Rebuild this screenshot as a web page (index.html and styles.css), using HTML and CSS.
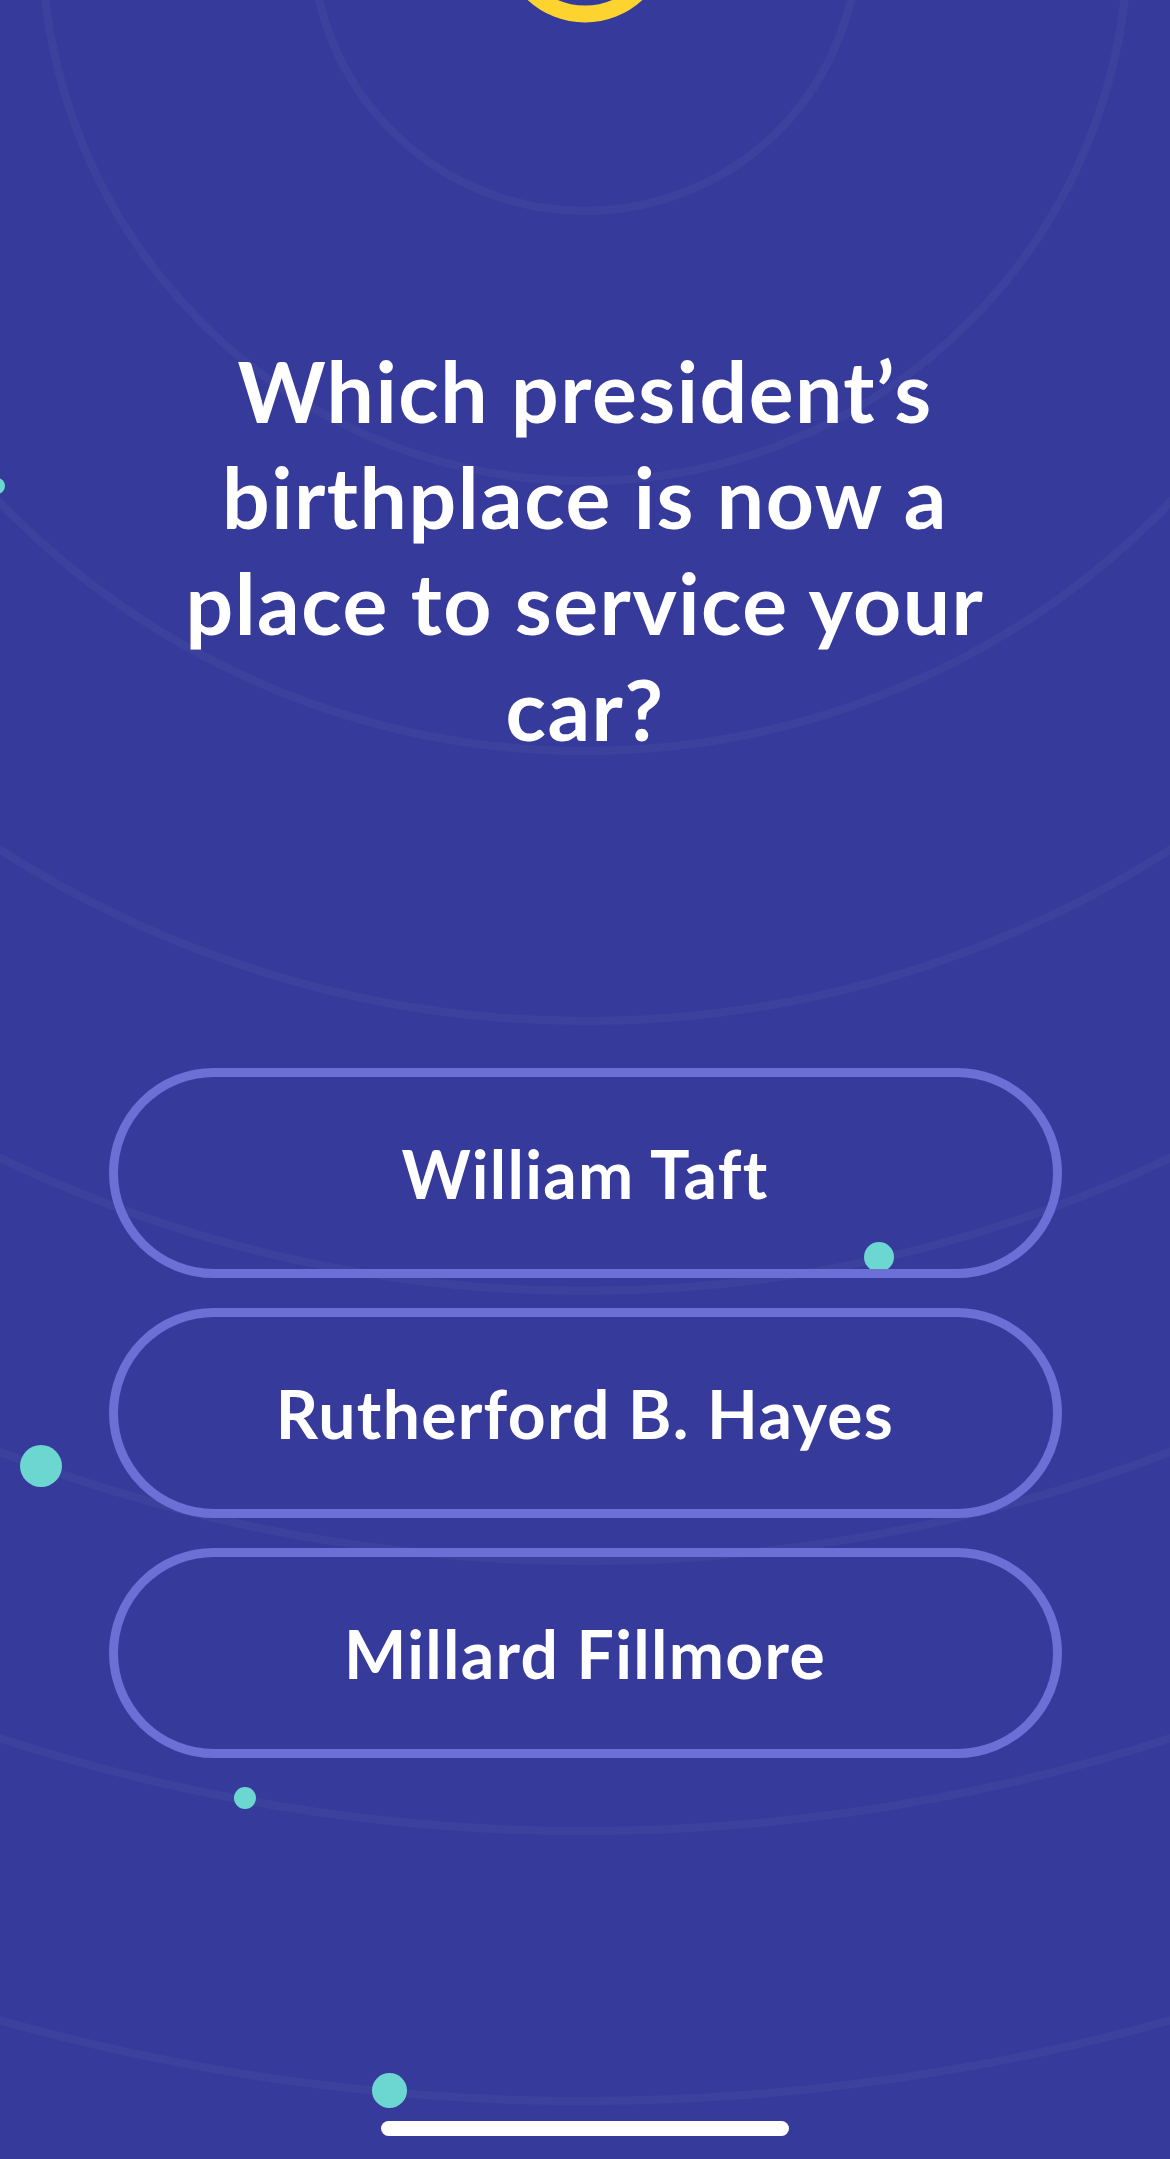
FILE: index.html
```html
<!DOCTYPE html>
<html lang="en">
<head>
<meta charset="utf-8">
<title>Trivia question</title>
<link rel="stylesheet" href="styles.css">
</head>
<body>
<div class="screen">
  <svg class="rings" width="1170" height="2159" viewBox="0 0 1170 2159" aria-hidden="true">
    <g fill="none" stroke="#ffffff" stroke-opacity="0.04" stroke-width="8">
      <circle cx="585" cy="-62" r="273"/>
      <circle cx="585" cy="-62" r="543"/>
      <circle cx="585" cy="-62" r="813"/>
      <circle cx="585" cy="-62" r="1083"/>
      <circle cx="585" cy="-62" r="1353"/>
      <circle cx="585" cy="-62" r="1623"/>
      <circle cx="585" cy="-62" r="1893"/>
      <circle cx="585" cy="-62" r="2163"/>
    </g>
    <circle cx="585" cy="-62" r="76" fill="none" stroke="#fdd42f" stroke-width="17"/>
  </svg>

  <span class="dot dot-a"></span>
  <span class="dot dot-b"></span>
  <span class="dot dot-c"></span>
  <span class="dot dot-d"></span>
  <span class="dot dot-e"></span>

  <main class="content">
    <h1 class="question">Which president’s birthplace is now a place to service your car?</h1>
    <div class="answers">
      <button class="answer">William Taft</button>
      <button class="answer">Rutherford B. Hayes</button>
      <button class="answer">Millard Fillmore</button>
    </div>
  </main>

  <div class="home-indicator"></div>
</div>
</body>
</html>
```

FILE: styles.css
```css
* { box-sizing: border-box; }

html, body {
  margin: 0;
  padding: 0;
  background: #363a9b;
}

body {
  font-family: "Lato", "Noto Sans", sans-serif;
  color: #ffffff;
}

.screen {
  position: relative;
  width: 1170px;
  height: 2159px;
  overflow: hidden;
  background: #363a9b;
  display: flex;
  flex-direction: column;
  align-items: center;
}

.rings {
  position: absolute;
  left: 0;
  top: 0;
  z-index: 0;
}

.dot {
  position: absolute;
  border-radius: 50%;
  background: #6cd7d1;
  z-index: 1;
}
.dot-a { left: 864px; top: 1242px; width: 30px; height: 30px; }
.dot-b { left: 20px; top: 1445px; width: 42px; height: 42px; }
.dot-c { left: 234px; top: 1787px; width: 22px; height: 22px; }
.dot-d { left: 372px; top: 2073px; width: 35px; height: 35px; }
.dot-e { left: -11px; top: 478px; width: 16px; height: 16px; }

.content {
  position: relative;
  z-index: 2;
  width: 100%;
  display: flex;
  flex-direction: column;
  align-items: center;
  padding-top: 338px;
}

.question {
  margin: 0;
  width: 880px;
  font-size: 84px;
  line-height: 106px;
  font-weight: 700;
  text-align: center;
  letter-spacing: 1.5px;
}

.answers {
  margin-top: 306px;
  display: flex;
  flex-direction: column;
  gap: 30px;
}

.answer {
  width: 953px;
  height: 210px;
  border: 9px solid #6b6fd6;
  border-radius: 105px;
  background: transparent;
  color: #ffffff;
  font-family: "Lato", "Noto Sans", sans-serif;
  font-weight: 700;
  font-size: 66px;
  letter-spacing: 1.3px;
  padding: 0;
  display: flex;
  align-items: center;
  justify-content: center;
}

.home-indicator {
  position: relative;
  z-index: 2;
  margin-top: auto;
  margin-bottom: 23px;
  width: 408px;
  height: 15px;
  border-radius: 8px;
  background: #ffffff;
}
```
